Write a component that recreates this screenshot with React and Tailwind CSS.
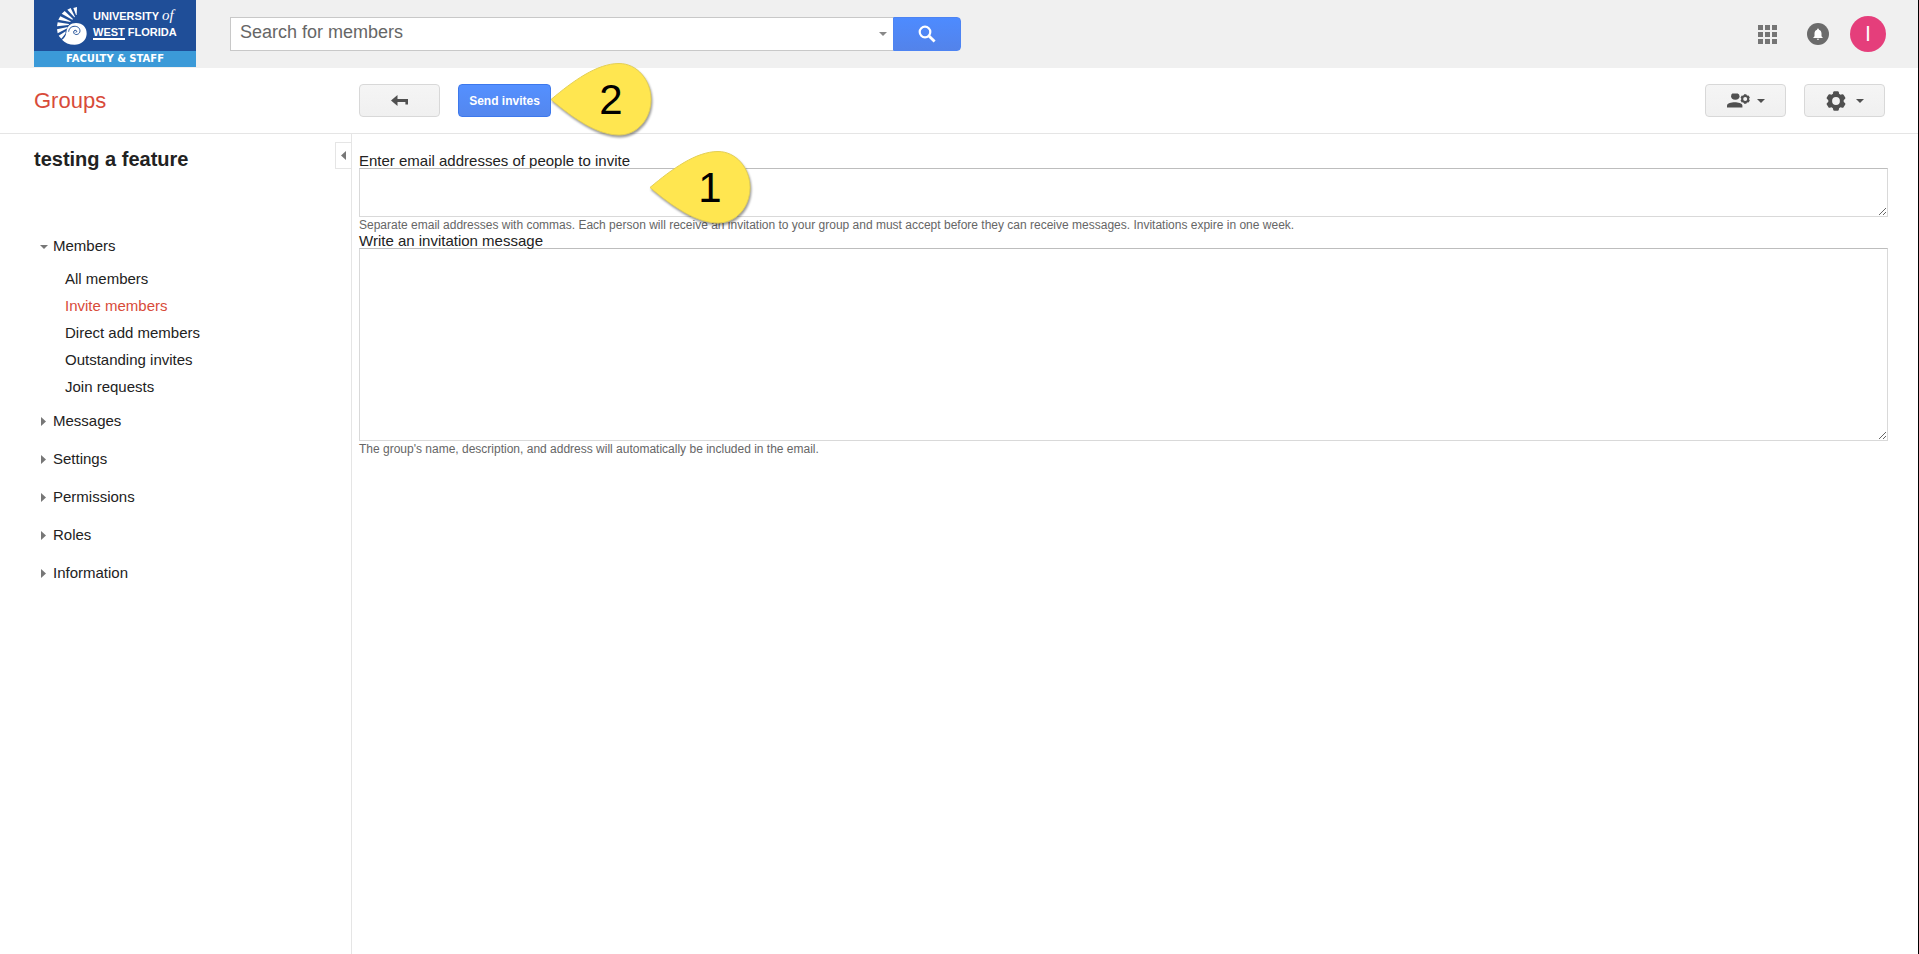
import { useState } from 'react';
import clsx from 'clsx';
import { MdNotifications } from 'react-icons/md';

const MEMBER_LINKS = [
  'All members',
  'Invite members',
  'Direct add members',
  'Outstanding invites',
  'Join requests',
];

const SECTIONS = ['Messages', 'Settings', 'Permissions', 'Roles', 'Information'];

const CaretDown = ({ className }) => (
  <svg viewBox="0 0 8 4" className={clsx('h-1 w-2 shrink-0', className)} aria-hidden="true">
    <path d="M0 0h8L4 4z" fill="currentColor" />
  </svg>
);

const CaretRight = () => (
  <svg viewBox="0 0 5 9" className="h-[9px] w-[5px] shrink-0 text-[#777]" aria-hidden="true">
    <path d="M0 0v9l5-4.500z" fill="currentColor" />
  </svg>
);

const GearIcon = ({ className }) => (
  <svg viewBox="0 0 20 20" className={className} aria-hidden="true">
    <circle cx="10" cy="10" r="5.8" fill="none" stroke="currentColor" strokeWidth="3.8" />
    {[0, 60, 120, 180, 240, 300].map((angle) => (
      <path
        key={angle}
        d="M6.6 4.600 7.200 1.300Q7.400.3 8.300.3h3.400q.9 0 1.100 1l.6 3.300z"
        fill="currentColor"
        transform={`rotate(${angle} 10 10)`}
      />
    ))}
  </svg>
);

const Shell = () => (
  <svg viewBox="0 0 90 114" className="h-[38px] w-[30px] shrink-0" aria-hidden="true">
    <g fill="#fff">
      <path d="M49 3 60 0 59 24 57 24z" />
      <path d="M31 8 41 3 54 30 52 31z" />
      <path d="M14 20 23 12 48 36 46 38z" />
      <path d="M4 38 10 28 41 43 40 45z" />
      <path d="M0 58 2 46 36 51 35 54z" />
      <path d="M2 79 0 67 32 60 31 64z" />
      <path d="M13 95 5 86 26 73 25 80z" />
      <path d="M15 98C22 94 27 87 28 76C30 57 41 48 57 48C77 48 90 62 89 81C88 101 72 113 53 113C36 113 23 107 15 98z" />
    </g>
    <path
      d="M35 74C36 63 45 57 55 58C66 59 71 68 68 76C65 83 55 85 51 79C48 74 52 68 57 70C61 72 59 76 56 76"
      fill="none"
      stroke="#1f4e98"
      strokeWidth="3"
    />
  </svg>
);

const Logo = () => (
  <a href="#home" className="flex w-[162px] shrink-0 flex-col text-white">
    <span className="flex h-[51px] items-center bg-[#1f4e98] pl-[23px]">
      <Shell />
      <span className="ml-[6px] flex flex-col pb-1 font-['Liberation_Sans',sans-serif] text-[11px] leading-4 font-bold whitespace-nowrap">
        <span>
          UNIVERSITY{' '}
          <em className="font-['Liberation_Serif',serif] text-[15px] leading-none font-normal">of</em>
        </span>
        <span>
          <span className="border-b-2 border-white">WEST</span> FLORIDA
        </span>
      </span>
    </span>
    <span className="bg-[#3b9ad8] text-center font-['DejaVu_Sans',sans-serif] text-[10px] leading-4 font-bold">
      FACULTY &amp; STAFF
    </span>
  </a>
);

const Header = () => (
  <header className="flex h-[68px] items-start bg-[#f0f0f0] pr-8 pl-[34px]">
    <Logo />
    <form onSubmit={(e) => e.preventDefault()} className="mt-[17px] ml-[34px] flex h-[34px] w-full max-w-[731px]">
      <div className="flex min-w-0 flex-1 items-center border border-r-0 border-[#c8c8c8] bg-white">
        <input
          type="text"
          aria-label="Search for members"
          placeholder="Search for members"
          className="h-full min-w-0 flex-1 pb-1 pl-[9px] text-lg leading-6 outline-none placeholder:text-[#666]"
        />
        <button type="button" aria-label="Search options" className="flex h-full w-5 items-center justify-center text-[#888]">
          <CaretDown />
        </button>
      </div>
      <button
        type="submit"
        aria-label="Search"
        className="flex w-[68px] items-center justify-center rounded-r-sm border border-[#4d84f3] bg-linear-to-b from-[#4d8bff] to-[#5383ea]"
      >
        <svg viewBox="0 0 18 18" className="size-[18px]" fill="none" stroke="#fff" aria-hidden="true">
          <circle cx="7" cy="7" r="5.3" strokeWidth="2.2" />
          <path d="m11 11 5.6 5.6" strokeWidth="2.8" />
        </svg>
      </button>
    </form>
    <div className="mt-4 ml-auto flex h-9 items-center pl-4">
      <button type="button" aria-label="Apps" className="mr-[30px] grid grid-cols-3 gap-[2px]">
        {Array.from({ length: 9 }, (_, i) => (
          <span key={i} className="size-[5px] bg-[#757575]" />
        ))}
      </button>
      <button
        type="button"
        aria-label="Notifications"
        className="mr-[21px] flex size-[22px] items-center justify-center rounded-full bg-[#6b6b6b]"
      >
        <MdNotifications className="size-[14px] text-white" />
      </button>
      <button
        type="button"
        aria-label="Account"
        className="size-9 rounded-full bg-[#e53e7b] font-[Roboto,sans-serif] text-xl text-white"
      >
        I
      </button>
    </div>
  </header>
);

// Yellow teardrop marker pointing left at the thing it numbers
const Callout = ({ number, className }) => (
  <div className={clsx('pointer-events-none absolute z-10 h-[74px] w-[102px]', className)}>
    <svg viewBox="0 0 102 74" className="h-full w-full overflow-visible drop-shadow-[1px_2px_1px_rgba(0,0,0,0.4)]" aria-hidden="true">
      <path
        d="M0 36.5C22 18 46 .5 68 .5C86 .5 100 17 100 36.5C100 56 86 72 68 72C46 72 22 55 0 36.5z"
        fill="#ffe650"
        stroke="#e3cf55"
        strokeWidth="1"
      />
    </svg>
    <span className="absolute inset-0 flex items-center justify-center pl-[18px] text-[42px] leading-none font-normal text-black">
      {number}
    </span>
  </div>
);

const ToolButton = ({ label, children }) => (
  <button
    type="button"
    aria-label={label}
    className="flex h-[33px] w-[81px] items-center justify-center rounded-sm border border-[#d8d8d8] bg-linear-to-b from-[#f5f5f5] to-[#f0f0f0] text-[#505050]"
  >
    {children}
  </button>
);

const Toolbar = () => (
  <div className="flex h-[66px] items-center border-b border-[#e5e5e5] pr-[33px] pl-[34px]">
    <div className="w-[325px] shrink-0">
      <a href="#groups" className="text-[22px] text-[#d84b3a]">Groups</a>
    </div>
    <ToolButton label="Back">
      <svg viewBox="0 0 18 12" className="h-3 w-[18px]" aria-hidden="true">
        <path d="M0 5.500 6.500 0v4H17v5.500h-2.600V7H6.500v4z" fill="currentColor" />
      </svg>
    </ToolButton>
    <div className="relative ml-[18px]">
      <button
        type="submit"
        form="invite"
        className="h-[33px] w-[93px] rounded-sm border border-[#3d78ec] bg-linear-to-b from-[#5490ff] to-[#5487ee] text-xs font-bold whitespace-nowrap text-white"
      >
        Send invites
      </button>
      <Callout number={2} className="-top-[21px] left-full" />
    </div>
    <div className="ml-auto flex gap-[18px]">
      <ToolButton label="Member actions">
        <svg viewBox="0 0 24 16" className="mr-[6px] h-4 w-6" fill="currentColor" aria-hidden="true">
          <path d="M5.300.5h5.400q1.800.6 1.800 2.800 0 3.300-4.200 3.500Q4.100 6.600 4.100 3.300 4.100 1.100 5.300.5z" />
          <path d="M0 14.500v-1.900C0 10.300 4.400 9.300 7.700 9.300s7.700 1 7.700 3.300v1.900z" />
          <circle cx="18.2" cy="6" r="3" fill="none" stroke="currentColor" strokeWidth="2" />
          {[0, 60, 120, 180, 240, 300].map((angle) => (
            <path key={angle} d="M16.700 3.300 17 1.300h2.400l.3 2z" transform={`rotate(${angle} 18.2 6)`} />
          ))}
        </svg>
        <CaretDown />
      </ToolButton>
      <ToolButton label="Settings menu">
        <GearIcon className="mr-[10px] size-5" />
        <CaretDown />
      </ToolButton>
    </div>
  </div>
);

const Sidebar = () => {
  const [active, setActive] = useState('Invite members');

  return (
    <aside className="relative w-[352px] shrink-0 border-r border-[#e5e5e5] pt-[13px] pl-[34px]">
      <h1 className="text-xl leading-6 font-bold">testing a feature</h1>
      <button
        type="button"
        aria-label="Collapse sidebar"
        className="absolute top-2 right-0 flex h-[27px] w-4 items-center justify-center border border-r-0 border-[#e5e5e5] text-[#777]"
      >
        <svg viewBox="0 0 5 9" className="h-[9px] w-[5px]" aria-hidden="true">
          <path d="M5 0v9L0 4.500z" fill="currentColor" />
        </svg>
      </button>
      <nav className="mt-[57px] text-[15px]">
        <button type="button" className="flex h-[37px] items-center gap-[5px] pl-[6px]">
          <CaretDown className="text-[#777]" />
          Members
        </button>
        <ul className="mb-[2px]">
          {MEMBER_LINKS.map((item) => (
            <li key={item}>
              <a
                href="#members"
                onClick={() => setActive(item)}
                className={clsx('block pl-[31px] leading-[27px]', item === active && 'text-[#d84b3a]')}
              >
                {item}
              </a>
            </li>
          ))}
        </ul>
        {SECTIONS.map((item) => (
          <button key={item} type="button" className="flex h-[38px] items-center gap-[7px] pl-[7px]">
            <CaretRight />
            {item}
          </button>
        ))}
      </nav>
    </aside>
  );
};

const InviteForm = () => (
  <form id="invite" onSubmit={(e) => e.preventDefault()} className="min-w-0 flex-1 pt-[19px] pr-[30px] pl-[7px]">
    <label htmlFor="emails" className="block text-[15px] leading-[15px]">
      Enter email addresses of people to invite
    </label>
    <div className="relative">
      <textarea
        id="emails"
        className="block h-[49px] w-full resize border border-[#d9d9d9] border-t-[#bdbdbd] p-1 text-sm outline-none"
      />
      <Callout number={1} className="-top-[17px] left-[291px]" />
    </div>
    <p className="text-xs leading-4 text-[#666]">
      Separate email addresses with commas. Each person will receive an invitation to your group and must accept before
      they can receive messages. Invitations expire in one week.
    </p>
    <label htmlFor="message" className="block text-[15px] leading-[15px]">
      Write an invitation message
    </label>
    <textarea
      id="message"
      className="block h-[193px] w-full resize border border-[#d9d9d9] border-t-[#bdbdbd] p-1 text-sm outline-none"
    />
    <p className="text-xs leading-4 text-[#666]">
      The group's name, description, and address will automatically be included in the email.
    </p>
  </form>
);

export default function App() {
  return (
    <div className="flex min-h-screen flex-col border-r border-black bg-white font-['Liberation_Sans',Arial,sans-serif] text-[#222]">
      <Header />
      <Toolbar />
      <main className="flex flex-1">
        <Sidebar />
        <InviteForm />
      </main>
    </div>
  );
}
